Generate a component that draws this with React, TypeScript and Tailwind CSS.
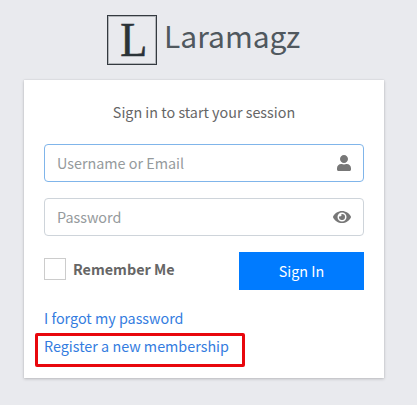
import type { ReactNode } from "react";
import { FaEye, FaUser } from "react-icons/fa";

function Field({ label, type, border, children }: { label: string; type: string; border: string; children: ReactNode }) {
  return (
    <div className={`mb-4 flex h-[38px] items-center rounded border bg-white pr-3 pl-3 ${border}`}>
      <input
        type={type}
        placeholder={label}
        className="h-6 min-w-0 flex-1 bg-transparent text-[14.35px] leading-6 outline-none placeholder:text-[#959a9c]"
      />
      <span className="text-base text-[#777]">{children}</span>
    </div>
  );
}

export default function App() {
  return (
    <main className="flex h-[405px] w-[417px] flex-col bg-[#e9eaee] pl-6 font-['Noto_Sans_CJK_SC',sans-serif] text-[14.35px] leading-6 text-[#666]">
      <header className="mt-[15px] mb-[15px] ml-[83px] flex h-[50px] text-[#50585e]">
        <div className="flex h-[50px] w-[50px] items-center justify-center border border-[#343a40] pl-[3px] font-['Liberation_Serif',serif] text-[48px] leading-[50px] text-[#2b3338] shadow-[inset_0_0_0_1px_rgba(52,58,64,0.3)]">
          <span className="inline-block scale-x-92 [-webkit-text-stroke:0.6px_#2b3338]">L</span>
        </div>
        <h1 className="ml-[7px] text-[30px] leading-[41px]">Laramagz</h1>
      </header>
      <section className="h-[298px] w-[360px] bg-white p-5 shadow-[0_0_1px_rgba(0,0,0,0.13),0_1px_3px_rgba(0,0,0,0.2)]">
        <p className="mb-5 text-center">Sign in to start your session</p>
        <Field label="Username or Email" type="text" border="border-[#80b5ea]">
          <FaUser className="h-4 w-[14px]" />
        </Field>
        <Field label="Password" type="password" border="border-[#ced4da]">
          <FaEye className="h-4 w-[18px]" />
        </Field>
        <div className="flex h-[38px] justify-between">
          <label className="flex h-[34px] items-center gap-[7px] font-bold">
            <span className="h-[22px] w-[22px] border border-[#ccc]" />
            Remember Me
          </label>
          <button className="h-[38px] w-[125px] bg-[#007bff] text-white">Sign In</button>
        </div>
        <nav className="mt-4 text-[#337ce0]">
          <p className="mb-1">I forgot my password</p>
          <p className="relative">
            Register a new membership
            <span className="absolute -top-[1px] -left-[9px] h-[34px] w-[210px] rounded-[2px] border-[3px] border-[#e8070d]" />
          </p>
        </nav>
      </section>
    </main>
  );
}
